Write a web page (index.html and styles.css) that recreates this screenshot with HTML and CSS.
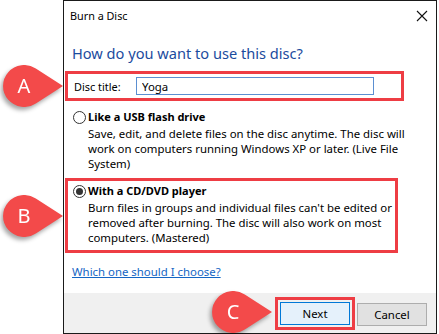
FILE: index.html
```html
<!DOCTYPE html>
<html lang="en">
<head>
    <meta charset="UTF-8">
    <title>Burn a Disc</title>
    <link rel="stylesheet" href="styles.css">
</head>
<body>

<div class="page">
    <div class="dialog">
        <div class="titlebar">
            <span>Burn a Disc</span>
            <svg class="close" width="12" height="12" viewBox="0 0 12 12">
                <path d="M1 1 L11 11 M11 1 L1 11" stroke="#111" stroke-width="1.1" fill="none"/>
            </svg>
        </div>

        <div class="content">
            <h1>How do you want to use this disc?</h1>

            <div class="mark mark-title">
                <label for="title">Disc title:</label>
                <input id="title" type="text" value="Yoga">
            </div>

            <div class="option">
                <div class="option-head">
                    <span class="radio"></span>
                    <b>Like a USB flash drive</b>
                </div>
                <p>Save, edit, and delete files on the disc anytime. The disc will<br>
                work on computers running Windows XP or later. (Live File<br>
                System)</p>
            </div>

            <div class="mark mark-option">
                <div class="option">
                    <div class="option-head">
                        <span class="radio checked"></span>
                        <b>With a CD/DVD player</b>
                    </div>
                    <p>Burn files in groups and individual files can't be edited or<br>
                    removed after burning. The disc will also work on most<br>
                    computers. (Mastered)</p>
                </div>
            </div>

            <a class="help" href="#">Which one should I choose?</a>
        </div>

        <div class="footer">
            <div class="mark mark-next">
                <button class="btn btn-default">Next</button>
            </div>
            <button class="btn">Cancel</button>
        </div>
    </div>

    <!-- callouts -->
    <svg class="callout callout-a" width="70" height="50" viewBox="-26 -25 70 50">
        <path d="M39 0 L11.8 -17.4 A21 21 0 1 0 11.8 17.4 Z" fill="#f34a4a"/>
        <text x="0" y="7" text-anchor="middle">A</text>
    </svg>
    <svg class="callout callout-b" width="70" height="50" viewBox="-26 -25 70 50">
        <path d="M39 0 L11.8 -17.4 A21 21 0 1 0 11.8 17.4 Z" fill="#f34a4a"/>
        <text x="0" y="7" text-anchor="middle">B</text>
    </svg>
    <svg class="callout callout-c" width="70" height="50" viewBox="-26 -25 70 50">
        <path d="M39 0 L11.8 -17.4 A21 21 0 1 0 11.8 17.4 Z" fill="#f34a4a"/>
        <text x="0" y="7" text-anchor="middle">C</text>
    </svg>
</div>

</body>
</html>
```

FILE: styles.css
```css
body {
    margin: 0;
    background-color: white;
    font-family: "Noto Sans", "Open Sans", sans-serif;
    font-size: 11.4px;
    color: #000;
}
.page {
    position: relative;
    width: 439px;
    height: 334px;
    overflow: hidden;
}
.dialog {
    margin-left: 63px;
    width: 374px;
    height: 334px;
    box-sizing: border-box;
    border: 1px solid #1a1a1a;
    display: flex;
    flex-direction: column;
    background-color: white;
}
.titlebar {
    height: 29px;
    display: flex;
    align-items: center;
    justify-content: space-between;
    padding: 0 8px 0 6px;
    font-size: 10.8px;
}
.content {
    flex: 1;
    padding-top: 12px;
}
h1 {
    margin: 0 0 7px 8px;
    font-size: 14.6px;
    line-height: 22px;
    font-weight: normal;
    color: #1b4b9e;
}
.mark {
    border: 3px solid #ee3d44;
}
.mark-title {
    margin-left: 1px;
    width: 327px;
    height: 24px;
    padding-left: 6px;
    display: flex;
    align-items: center;
}
.mark-title label {
    width: 62px;
    font-size: 10.9px;
}
.mark-title input {
    width: 226px;
    height: 16px;
    padding: 0 5px;
    border: 1px solid #5b8fd1;
    font-family: inherit;
    font-size: 11.4px;
    outline: none;
}
.option {
    margin: 7px 0 0 9px;
}
.option-head {
    display: flex;
    align-items: center;
    line-height: 18px;
}
.option-head b {
    margin-left: 2px;
    font-size: 11px;
}
.radio {
    width: 11px;
    height: 11px;
    border: 1px solid #333;
    border-radius: 50%;
    display: flex;
    align-items: center;
    justify-content: center;
}
.radio.checked::after {
    content: "";
    width: 7px;
    height: 7px;
    border-radius: 50%;
    background-color: #333;
}
.option p {
    margin: 0 0 0 15px;
    line-height: 15px;
    white-space: nowrap;
}
.mark-option {
    margin: 7px 0 0 1px;
    width: 327px;
    padding: 1px 0 5px 0;
}
.mark-option .option {
    margin: 0 0 0 5px;
}
.help {
    display: inline-block;
    margin: 11px 0 0 8px;
    line-height: 16px;
    color: #1466c4;
}
.footer {
    height: 40px;
    background-color: #f0f0f0;
    display: flex;
    justify-content: flex-end;
    align-items: flex-start;
    gap: 2px;
    padding: 4px 9px 0 0;
    box-sizing: border-box;
}
.mark-next {
    padding: 2px;
}
.btn {
    width: 70px;
    height: 23px;
    border: 1px solid #adadad;
    background-color: #e1e1e1;
    font-family: inherit;
    font-size: 11.4px;
    color: #000;
    padding: 0;
}
.footer > .btn {
    margin-top: 6px;
}
.btn-default {
    border-color: #0078d7;
    background-color: #e5f1fb;
}
.callout {
    position: absolute;
    filter: drop-shadow(-2px 3px 2px rgba(0, 0, 0, 0.35));
}
.callout text {
    fill: white;
    font-family: "Noto Sans", sans-serif;
    font-size: 20px;
}
.callout-a {
    left: -2px;
    top: 61px;
}
.callout-b {
    left: -2px;
    top: 191px;
}
.callout-c {
    left: 207px;
    top: 287px;
}
```
